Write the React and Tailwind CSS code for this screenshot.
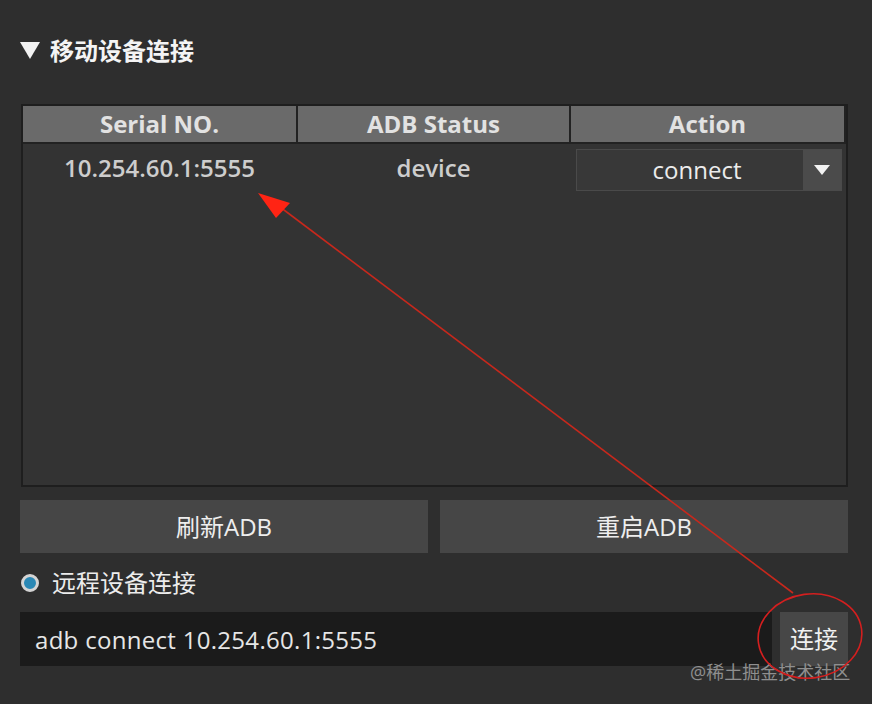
import { useState } from "react";

const FONT = { fontFamily: '"Open Sans", "Noto Sans CJK SC", sans-serif' };

const columns = ["Serial NO.", "ADB Status", "Action"];

const devices = [{ serial: "10.254.60.1:5555", status: "device", action: "connect" }];

export default function App() {
  const [command, setCommand] = useState("adb connect 10.254.60.1:5555");

  return (
    <div className="relative w-[872px] h-[704px] overflow-hidden bg-[#2e2e2e] text-[#e6e6e6]" style={FONT}>
      {/* Header */}
      <div className="flex items-center pt-[37px] pl-[19px] h-[64px]">
        <svg width="22" height="19" viewBox="0 0 22 19" className="mr-[9px]">
          <path d="M1 1 L21 1 L11 18 Z" fill="#f2f2f2" />
        </svg>
        <span className="text-[24px] font-bold leading-none text-[#f4f4f4]">移动设备连接</span>
      </div>

      {/* Device table */}
      <div className="mt-[40px] ml-[21px] w-[827px] h-[383px] border-2 border-[#1e1e1e] bg-[#333333]">
        <div className="grid grid-cols-[273px_271px_273px] gap-x-[2px] border-b-2 border-[#222222] bg-[#222222]">
          {columns.map((col) => (
            <div
              key={col}
              className="h-[36px] flex items-center justify-center bg-[#6a6a6a] text-[24px] font-bold text-[#e2e2e2]"
            >
              {col}
            </div>
          ))}
        </div>
        {devices.map((d) => (
          <div key={d.serial} className="grid grid-cols-[273px_271px_273px] gap-x-[2px] h-[48px] items-center">
            <div className="text-center text-[24px] font-semibold text-[#cdcdcd]">{d.serial}</div>
            <div className="text-center text-[24px] font-semibold text-[#cdcdcd]">{d.status}</div>
            <div className="pl-[5px] pt-[4px]">
              <div className="flex h-[42px] w-[266px] border border-[#4a4a4a] bg-[#383838]">
                <div className="flex-1 flex items-center justify-center pl-[14px] text-[24px] text-[#ececec]">{d.action}</div>
                <div className="w-[38px] flex items-center justify-center bg-[#4b4b4b]">
                  <svg width="18" height="12" viewBox="0 0 18 12">
                    <path d="M1 1 L17 1 L9 11 Z" fill="#f2f2f2" />
                  </svg>
                </div>
              </div>
            </div>
          </div>
        ))}
      </div>

      {/* ADB buttons */}
      <div className="mt-[13px] ml-[20px] flex gap-[12px]">
        <button className="w-[408px] h-[53px] bg-[#464646] text-[24px] text-[#eeeeee]">刷新ADB</button>
        <button className="w-[408px] h-[53px] bg-[#464646] text-[24px] text-[#eeeeee]">重启ADB</button>
      </div>

      {/* Remote connect */}
      <div className="mt-[16px] ml-[21px] flex items-center h-[28px]">
        <span className="w-[18px] h-[18px] rounded-full border-[3px] border-[#d4d4d4] bg-[#2a88b5]" />
        <span className="ml-[13px] text-[24px] leading-none text-[#ececec]">远程设备连接</span>
      </div>

      <div className="mt-[15px] ml-[20px] flex gap-[8px]">
        <input
          value={command}
          onChange={(e) => setCommand(e.target.value)}
          className="w-[752px] h-[54px] bg-[#1b1b1b] px-[15px] text-[24px] tracking-[0.3px] text-[#e6e6e6] outline-none"
          style={FONT}
        />
        <button className="w-[68px] h-[54px] bg-[#474747] text-[24px] text-[#f0f0f0]">连接</button>
      </div>

      {/* Watermark */}
      <div className="absolute left-[690px] top-[659px] text-[18px] text-[#8f8f8f]">@稀土掘金技术社区</div>

      {/* Annotation overlay */}
      <svg className="absolute inset-0 pointer-events-none" width="872" height="704" viewBox="0 0 872 704">
        <line x1="793" y1="593" x2="280" y2="207" stroke="#c8281c" strokeWidth="1.6" />
        <path d="M258 193 L290 203 L276 218 Z" fill="#ff2414" />
        <ellipse cx="810" cy="636" rx="52" ry="42" fill="none" stroke="#d41f1f" strokeWidth="1.6" transform="rotate(-8 810 636)" />
      </svg>
    </div>
  );
}
